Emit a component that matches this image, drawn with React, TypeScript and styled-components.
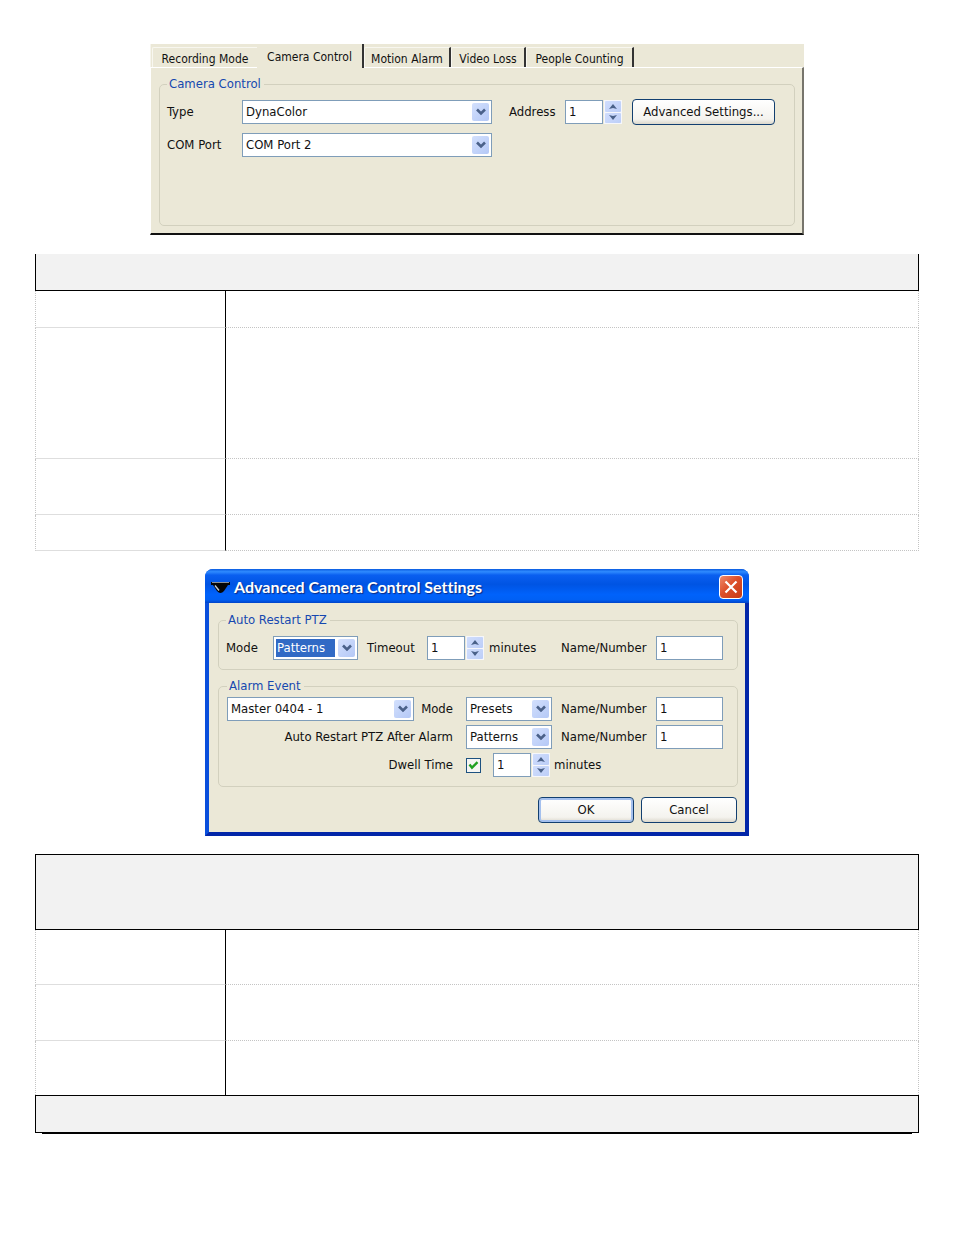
import React, { useState } from "react";
import styled, { createGlobalStyle, css } from "styled-components";

const GlobalStyle = createGlobalStyle`
  * { box-sizing: border-box; }
  body {
    margin: 0;
    background: #fff;
    color: #111;
    font-family: "DejaVu Sans Condensed", "DejaVu Sans", Tahoma, sans-serif;
    font-size: 13px;
    line-height: 16px;
  }
  button, input, select { font: inherit; color: inherit; margin: 0; }
`;

const face = "#ebe8d7";

const Page = styled.main`
  display: flex;
  flex-direction: column;
  gap: 18px;
  padding: 44px 35px 100px;
`;

/* ---- Shared controls ---- */

const Group = styled.fieldset<{ $pad: string }>`
  min-width: 0;
  margin: 0;
  padding: ${(p) => p.$pad};
  border: 1px solid #d2d0be;
  border-radius: 5px;
`;

const Legend = styled.legend`
  height: 16px;
  padding: 0 3px 0 2px;
  color: #1648b0;
  font-size: 13px;
`;

const Label = styled.label<{ $indent?: number; $end?: boolean; $span?: number }>`
  padding-left: ${(p) => p.$indent ?? 0}px;
  white-space: nowrap;
  ${(p) => p.$end && css`padding-right: 13px; text-align: right;`}
  ${(p) => p.$span && css`grid-column: span ${p.$span};`}
`;

const SelectBox = styled.div`
  position: relative;
  height: 24px;
  background: #fff;
  border: 1px solid #7f9db9;
`;

const NativeSelect = styled.select<{ $active?: boolean }>`
  display: block;
  appearance: none;
  width: calc(100% - 24px);
  height: 18px;
  margin: 2px;
  padding: 0 1px;
  border: 0;
  border-radius: 0;
  outline: 0;
  background: ${(p) => (p.$active ? "#316ac5" : "#fff")};
  color: ${(p) => (p.$active ? "#fff" : "#111")};
`;

const DropArrow = styled.span`
  position: absolute;
  top: 2px;
  right: 2px;
  display: grid;
  place-items: center;
  width: 17px;
  height: 18px;
  border-radius: 2px;
  background: linear-gradient(135deg, #d3e0fd, #b4c8f6);
  pointer-events: none;
`;

const TextInput = styled.input`
  width: 100%;
  min-width: 0;
  height: 24px;
  padding: 0 3px 2px;
  border: 1px solid #7f9db9;
  border-radius: 0;
  outline: 0;
  background: #fff;
`;

const SpinBox = styled.div`
  display: flex;
  gap: 1px;
  width: 57px;
`;

const SpinButtons = styled.div`
  flex: 0 0 18px;
  display: grid;
  gap: 1px;
  padding: 1px;
  background: #f6f7fb;
`;

const SpinButton = styled.button`
  display: grid;
  place-items: center;
  padding: 0;
  border: 0;
  border-radius: 1px;
  background: linear-gradient(135deg, #d0ddfc, #bccef8);
`;

const PushButton = styled.button<{ $primary?: boolean }>`
  height: 26px;
  padding: 0 4px;
  border: 1px solid #123f70;
  border-radius: 4px;
  background: linear-gradient(#ffffff, #f4f3ee 80%, #dcd8cc);
  white-space: nowrap;
  ${(p) => p.$primary && css`box-shadow: inset 0 0 0 2px #a4c0ee;`}
`;

function Select(props: { id: string; value: string; active?: boolean; name?: string }) {
  return (
    <SelectBox>
      <NativeSelect id={props.id} $active={props.active} aria-label={props.name}>
        <option>{props.value}</option>
      </NativeSelect>
      <DropArrow>
        <svg width="10" height="8" viewBox="0 0 10 8">
          <path d="M1 1.5 5 5.5 9 1.5" fill="none" stroke="#4a6189" strokeWidth="2.6" />
        </svg>
      </DropArrow>
    </SelectBox>
  );
}

function Spinner({ id, name }: { id: string; name?: string }) {
  const [value, setValue] = useState("1");
  const step = (by: number) => setValue(String(Math.max(0, Number(value) + by)));
  return (
    <SpinBox>
      <TextInput id={id} aria-label={name} value={value} onChange={(e) => setValue(e.target.value)} />
      <SpinButtons>
        <SpinButton type="button" aria-label="Increase" onClick={() => step(1)}>
          <svg width="8" height="5" viewBox="0 0 8 5"><path d="M0 5 4 0 8 5 4 4Z" fill="#4a6189" /></svg>
        </SpinButton>
        <SpinButton type="button" aria-label="Decrease" onClick={() => step(-1)}>
          <svg width="8" height="5" viewBox="0 0 8 5"><path d="M0 0 4 5 8 0 4 1Z" fill="#4a6189" /></svg>
        </SpinButton>
      </SpinButtons>
    </SpinBox>
  );
}

/* ---- Camera control tab panel ---- */

const TabPanel = styled.section`
  align-self: center;
  width: 100%;
  max-width: 654px;
  margin-bottom: 1px;
  background: ${face};
`;

const TabStrip = styled.div`
  display: flex;
  align-items: flex-end;
  height: 23px;
  padding-left: 1px;
  border-left: 1px solid #f6f5ee;
`;

const Tab = styled.button<{ $width: number; $selected?: boolean; $bar?: boolean }>`
  flex: 0 1 ${(p) => p.$width}px;
  height: 20px;
  padding: 2px 0 0;
  border: 0;
  border-top: 1px solid #f8f7f0;
  border-left: 1px solid #f8f7f0;
  border-radius: 2px 0 0 0;
  background: ${face};
  font-size: 12px;
  white-space: nowrap;
  ${(p) => p.$bar && css`border-right: 2px solid #333;`}
  ${(p) =>
    p.$selected &&
    css`
      position: relative;
      height: 24px;
      margin-bottom: -1px;
      padding: 2px 0 0;
      border-top: 0;
      border-left: 0;
    `}
`;

const TabBody = styled.div`
  padding: 8px 7px 7px 8px;
  border: 1px solid #fff;
  border-right: 2px solid #77756c;
  border-bottom: 2px solid #111;
`;

const CameraGrid = styled.div`
  display: grid;
  grid-template-columns: 75px minmax(0, 1fr) 73px 67px 143px;
  grid-auto-rows: 24px;
  row-gap: 9px;
  align-items: center;
`;

/* ---- Advanced settings dialog ---- */

const Dialog = styled.section`
  align-self: center;
  width: 100%;
  max-width: 544px;
  border-radius: 8px 8px 0 0;
  overflow: hidden;
  background: #0a4fdc;
`;

const TitleBar = styled.header`
  display: flex;
  align-items: center;
  gap: 4px;
  height: 34px;
  padding: 2px 6px 0;
  background: linear-gradient(#0a5be0, #2f8bff 8%, #0a5ff0 18%, #0054e3 45%, #0062fb 75%, #0060f5 90%, #0043c8);
`;

const Title = styled.h1`
  flex: 1;
  margin: 0;
  color: #fff;
  font-family: Lato, "Trebuchet MS", sans-serif;
  font-size: 16px;
  line-height: 20px;
  font-weight: 700;
  font-variant-ligatures: none;
  white-space: nowrap;
  text-shadow: 1px 1px 1px #0a2a80;
`;

const CloseButton = styled.button`
  display: grid;
  place-items: center;
  width: 24px;
  height: 24px;
  padding: 0;
  border: 1px solid #fff;
  border-radius: 4px;
  background: linear-gradient(135deg, #ee8a6c, #dd4f2a 45%, #c63a14);
`;

const DialogBody = styled.div`
  display: grid;
  gap: 8px;
  padding: 9px 7px 9px 9px;
  border: solid #0a4fdc;
  border-width: 0 4px 4px;
  border-right-color: #0226a8;
  border-bottom-color: #0226a8;
  background: ${face};
`;

const RestartGrid = styled.div`
  display: grid;
  grid-template-columns: 47px minmax(0, 1fr) 69px 57px 77px 95px 67px;
  align-items: center;
`;

const AlarmGrid = styled.div`
  display: grid;
  grid-template-columns: minmax(0, 1fr) 52px 86px 104px 67px;
  grid-auto-rows: 24px;
  row-gap: 4px;
  align-items: center;
`;

const DwellControls = styled.div`
  grid-column: span 3;
  display: flex;
  align-items: center;
`;

const CheckBox = styled.input`
  appearance: none;
  width: 15px;
  height: 15px;
  margin-right: 12px;
  border: 1px solid #1d5180;
  background: #f5f5f2;
  &:checked {
    background: #f5f5f2
      url("data:image/svg+xml,%3Csvg xmlns='http://www.w3.org/2000/svg' viewBox='0 0 13 13'%3E%3Cpath d='M2.5 5.5 5 8.7 10.5 3.2' fill='none' stroke='%2321a121' stroke-width='2.4'/%3E%3C/svg%3E");
  }
`;

const Actions = styled.div`
  display: grid;
  grid-template-columns: 96px 96px;
  justify-content: end;
  gap: 7px;
  padding: 2px 1px 0 0;
`;

/* ---- Ruled tables ---- */

const Table = styled.table`
  width: 100%;
  border-collapse: separate;
  border-spacing: 0;
  table-layout: fixed;
`;

const Band = styled.td<{ $height: number; $open?: boolean }>`
  height: ${(p) => p.$height}px;
  padding: 0;
  background: #f2f2f2;
  border: 1px solid #000;
  ${(p) => p.$open && css`border-top: 0;`}
`;

const NameCell = styled.td<{ $height: number; $last?: boolean }>`
  height: ${(p) => p.$height}px;
  padding: 0;
  border-left: 1px dotted #c4c4c4;
  border-right: 1px solid #000;
  border-bottom: ${(p) => (p.$last ? "0" : "1px solid #dedede")};
`;

const TextCell = styled.td<{ $last?: boolean }>`
  padding: 0;
  border-right: 1px dotted #c4c4c4;
  border-bottom: ${(p) => (p.$last ? "0" : "1px dotted #c4c4c4")};
`;

const Rule = styled.hr`
  height: 1px;
  margin: 0 7px;
  border: 0;
  background: #000;
`;

function RuledTable(props: { head: number; open?: boolean; rows: number[]; foot?: number }) {
  return (
    <Table>
      <colgroup>
        <col width={191} />
        <col />
      </colgroup>
      <tbody>
        <tr>
          <Band colSpan={2} $height={props.head} $open={props.open} />
        </tr>
        {props.rows.map((height, i) => {
          const last = props.foot !== undefined && i === props.rows.length - 1;
          return (
            <tr key={i}>
              <NameCell $height={height} $last={last} />
              <TextCell $last={last} />
            </tr>
          );
        })}
        {props.foot !== undefined && (
          <tr>
            <Band colSpan={2} $height={props.foot} />
          </tr>
        )}
      </tbody>
    </Table>
  );
}

export default function App() {
  return (
    <>
      <GlobalStyle />
      <Page>
        <TabPanel>
          <TabStrip role="tablist">
            <Tab role="tab" $width={105}>Recording Mode</Tab>
            <Tab role="tab" aria-selected $width={107} $selected $bar>Camera Control</Tab>
            <Tab role="tab" $width={87} $bar>Motion Alarm</Tab>
            <Tab role="tab" $width={75} $bar>Video Loss</Tab>
            <Tab role="tab" $width={108} $bar>People Counting</Tab>
          </TabStrip>
          <TabBody>
            <Group $pad="8px 19px 68px 7px">
              <Legend>Camera Control</Legend>
              <CameraGrid>
                <Label htmlFor="type">Type</Label>
                <Select id="type" value="DynaColor" />
                <Label htmlFor="address" $indent={17}>Address</Label>
                <Spinner id="address" />
                <PushButton type="button">Advanced Settings...</PushButton>
                <Label htmlFor="port">COM Port</Label>
                <Select id="port" value="COM Port 2" />
              </CameraGrid>
            </Group>
          </TabBody>
        </TabPanel>

        <RuledTable head={37} open rows={[37, 131, 56, 36]} />

        <Dialog>
          <TitleBar>
            <svg width="19" height="13" viewBox="0 0 19 13">
              <path d="M0 1h19v3h-2l-4 6q-3.500 4-7 0L2 4H0Z" fill="#050505" />
              <path d="M1 1.500h17" stroke="#8a8f98" strokeWidth="1" />
              <path d="M4 4.500 8 9.500" stroke="#c8ccd2" strokeWidth="1.400" />
            </svg>
            <Title>Advanced Camera Control Settings</Title>
            <CloseButton type="button" aria-label="Close">
              <svg width="14" height="14" viewBox="0 0 14 14">
                <path d="M1.500 1.500 12.500 12.500M12.500 1.500 1.500 12.500" stroke="#fff" strokeWidth="2.200" />
              </svg>
            </CloseButton>
          </TitleBar>
          <DialogBody>
            <Group $pad="8px 14px 9px 7px">
              <Legend>Auto Restart PTZ</Legend>
              <RestartGrid>
                <Label htmlFor="mode">Mode</Label>
                <Select id="mode" value="Patterns" active />
                <Label htmlFor="timeout" $indent={9}>Timeout</Label>
                <Spinner id="timeout" />
                <Label htmlFor="timeout" $indent={5}>minutes</Label>
                <Label htmlFor="restart-name">Name/Number</Label>
                <TextInput id="restart-name" defaultValue="1" />
              </RestartGrid>
            </Group>
            <Group $pad="3px 14px 9px 8px">
              <Legend>Alarm Event</Legend>
              <AlarmGrid>
                <Select id="source" value="Master 0404 - 1" name="Alarm Event" />
                <Label htmlFor="alarm-mode" $end>Mode</Label>
                <Select id="alarm-mode" value="Presets" />
                <Label htmlFor="alarm-name" $indent={9}>Name/Number</Label>
                <TextInput id="alarm-name" defaultValue="1" />

                <Label htmlFor="after-mode" $end $span={2}>Auto Restart PTZ After Alarm</Label>
                <Select id="after-mode" value="Patterns" />
                <Label htmlFor="after-name" $indent={9}>Name/Number</Label>
                <TextInput id="after-name" defaultValue="1" />

                <Label htmlFor="dwell" $end $span={2}>Dwell Time</Label>
                <DwellControls>
                  <CheckBox id="dwell" type="checkbox" defaultChecked />
                  <Spinner id="dwell-minutes" name="Dwell Time" />
                  <Label htmlFor="dwell-minutes" $indent={4}>minutes</Label>
                </DwellControls>
              </AlarmGrid>
            </Group>
            <Actions>
              <PushButton type="button" $primary>OK</PushButton>
              <PushButton type="button">Cancel</PushButton>
            </Actions>
          </DialogBody>
        </Dialog>

        <div>
          <RuledTable head={76} rows={[55, 56, 54]} foot={38} />
          <Rule />
        </div>
      </Page>
    </>
  );
}
